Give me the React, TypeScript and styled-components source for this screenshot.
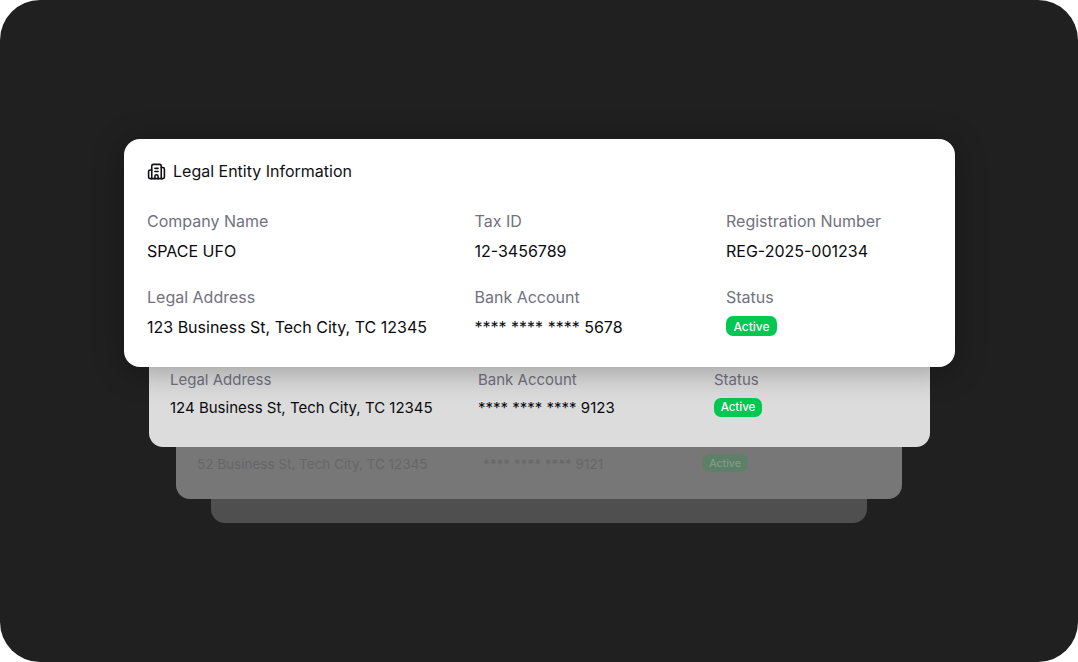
import styled, { createGlobalStyle } from 'styled-components';
import { Building2 } from 'lucide-react';

const GlobalStyle = createGlobalStyle`
  html, body {
    margin: 0;
    background: #fff;
  }
`;

const Stage = styled.div`
  width: 1078px;
  height: 662px;
  box-sizing: border-box;
  padding-top: 139px;
  border-radius: 40px;
  background: #202020;
  display: flex;
  flex-direction: column;
  align-items: center;
  font-family: Inter, 'Liberation Sans', sans-serif;
  overflow: hidden;
`;

const MainCard = styled.section`
  position: relative;
  z-index: 4;
  width: 831px;
  box-sizing: border-box;
  padding: 20px 23.5px 28px;
  border-radius: 16px;
  background: #fff;
  box-shadow: 0 4px 32px rgba(0, 0, 0, 0.3);
`;

const Header = styled.div`
  display: flex;
  align-items: center;
  gap: 7px;
  height: 24px;
  margin-bottom: 26px;
  font-size: 16px;
  color: #101014;

  svg {
    width: 19px;
    height: 19px;
    stroke-width: 2;
  }
`;

const FieldGrid = styled.div<{ $columns: string; $gap?: number }>`
  display: grid;
  grid-template-columns: ${(props) => props.$columns};
  row-gap: ${(props) => props.$gap ?? 22}px;
`;

const Field = styled.div<{ $gap?: number }>`
  display: flex;
  flex-direction: column;
  align-items: flex-start;
  gap: ${(props) => props.$gap ?? 6}px;
`;

const Label = styled.div<{ $size?: number }>`
  font-size: ${(props) => props.$size ?? 16}px;
  line-height: 24px;
  color: #71717f;
`;

const Value = styled.div<{ $size?: number; $color?: string }>`
  font-size: ${(props) => props.$size ?? 16}px;
  line-height: 24px;
  color: ${(props) => props.$color ?? '#0b0b0f'};
`;

const Badge = styled.span<{ $w: number; $h: number; $size: number; $faded?: boolean }>`
  display: inline-flex;
  align-items: center;
  justify-content: center;
  width: ${(props) => props.$w}px;
  height: ${(props) => props.$h}px;
  margin-top: ${(props) => (24 - props.$h) / 2 - 1}px;
  border-radius: 7px;
  font-size: ${(props) => props.$size}px;
  font-weight: 500;
  background: ${(props) => (props.$faded ? '#5e8069' : '#00c853')};
  color: ${(props) => (props.$faded ? '#7f9c88' : '#fff')};
`;

const BackCard = styled.section<{ $z: number; $w: number; $bg: string; $overlap: number }>`
  position: relative;
  z-index: ${(props) => props.$z};
  width: ${(props) => props.$w}px;
  margin-top: ${(props) => -props.$overlap}px;
  box-sizing: border-box;
  border-radius: 0 0 14px 14px;
  background: ${(props) => props.$bg};
`;

const SecondBody = styled.div`
  padding: 19px 21.5px 27px;
`;

const ThirdBody = styled.div`
  padding: 23px 21px 23px;
`;

const EmptyBody = styled.div`
  height: 34px;
`;

export default function App() {
  return (
    <>
      <GlobalStyle />
      <Stage>
        <MainCard>
          <Header>
            <Building2 />
            Legal Entity Information
          </Header>
          <FieldGrid $columns="327.5px 251.5px 1fr">
            <Field>
              <Label>Company Name</Label>
              <Value>SPACE UFO</Value>
            </Field>
            <Field>
              <Label>Tax ID</Label>
              <Value>12-3456789</Value>
            </Field>
            <Field>
              <Label>Registration Number</Label>
              <Value>REG-2025-001234</Value>
            </Field>
            <Field>
              <Label>Legal Address</Label>
              <Value>123 Business St, Tech City, TC 12345</Value>
            </Field>
            <Field>
              <Label>Bank Account</Label>
              <Value>**** **** **** 5678</Value>
            </Field>
            <Field>
              <Label>Status</Label>
              <Badge $w={51} $h={20} $size={12}>Active</Badge>
            </Field>
          </FieldGrid>
        </MainCard>
        <BackCard $z={3} $w={781} $bg="#dcdcdc" $overlap={18}>
          <SecondBody>
            <FieldGrid $columns="308px 236px 1fr">
              <Field $gap={4}>
                <Label $size={15}>Legal Address</Label>
                <Value $size={15}>124 Business St, Tech City, TC 12345</Value>
              </Field>
              <Field $gap={4}>
                <Label $size={15}>Bank Account</Label>
                <Value $size={15}>**** **** **** 9123</Value>
              </Field>
              <Field $gap={4}>
                <Label $size={15}>Status</Label>
                <Badge $w={48} $h={19} $size={11.5}>Active</Badge>
              </Field>
            </FieldGrid>
          </SecondBody>
        </BackCard>
        <BackCard $z={2} $w={726} $bg="#777777" $overlap={18}>
          <ThirdBody>
            <FieldGrid $columns="286px 219px 1fr">
              <Value $size={13.5} $color="#666668">52 Business St, Tech City, TC 12345</Value>
              <Value $size={13.5} $color="#666668">**** **** **** 9121</Value>
              <Badge $w={46} $h={18} $size={10.5} $faded>Active</Badge>
            </FieldGrid>
          </ThirdBody>
        </BackCard>
        <BackCard $z={1} $w={656} $bg="#4f4f4f" $overlap={10}>
          <EmptyBody />
        </BackCard>
      </Stage>
    </>
  );
}
